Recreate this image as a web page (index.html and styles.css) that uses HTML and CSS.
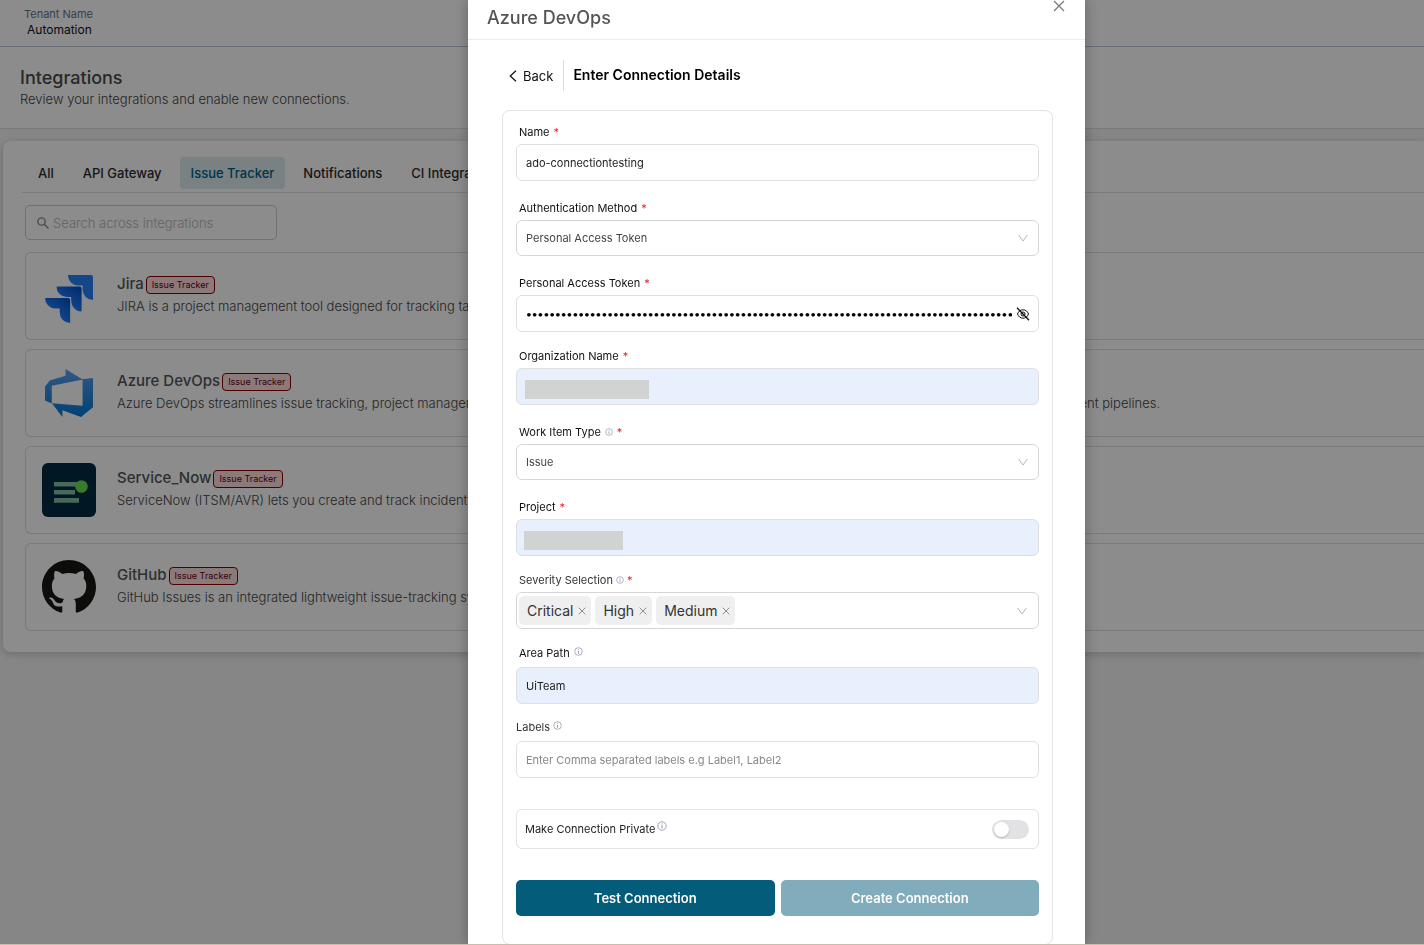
FILE: index.html
```html
<!DOCTYPE html>
<html lang="en">
<head>
<meta charset="utf-8">
<title>Integrations</title>
<link rel="stylesheet" href="styles.css">
</head>
<body>
<svg class="defs" aria-hidden="true">
  <defs>
    <linearGradient id="jira-a" x1="1" y1="0" x2="0.4" y2="0.7"><stop offset="0.1" stop-color="#0052cc"/><stop offset="1" stop-color="#2680fb"/></linearGradient>
    <linearGradient id="azure" x1="0" y1="1" x2="0" y2="0"><stop offset="0" stop-color="#0078d4"/><stop offset="1" stop-color="#5ea0ef"/></linearGradient>
    <symbol id="info" viewBox="0 0 16 16"><circle cx="8" cy="8" r="6.8" fill="none" stroke="currentColor" stroke-width="1.3"/><path d="M8 7v5M8 4v1.6" stroke="currentColor" stroke-width="1.6"/></symbol>
    <symbol id="chevron" viewBox="0 0 10 8"><path d="M.7 1 5 7 9.300 1" fill="none" stroke="currentColor"/></symbol>
    <symbol id="cross" viewBox="0 0 12 12"><path d="m1 1 10 10M11 1 1 11" fill="none" stroke="currentColor" stroke-width="1.2"/></symbol>
  </defs>
</svg>

<header class="tenant">
  <span class="tenant-label">Tenant Name</span>
  <span class="tenant-name">Automation</span>
</header>
<div class="page-head">
  <h1>Integrations</h1>
  <p>Review your integrations and enable new connections.</p>
</div>
<main class="panel">
  <nav class="tabs">
    <button type="button">All</button>
    <button type="button">API Gateway</button>
    <button type="button" class="active">Issue Tracker</button>
    <button type="button">Notifications</button>
    <button type="button">CI Integrations</button>
  </nav>
  <label class="search">
    <svg viewBox="0 0 12 12" width="12" height="12" fill="none" stroke="currentColor" stroke-width="1.3"><circle cx="4.500" cy="4.500" r="3.700"/><path d="m7.300 7.300 4.200 4.200"/></svg>
    <input type="search" placeholder="Search across integrations" aria-label="Search across integrations">
  </label>
  <ul class="items">
    <li class="item">
      <div class="logo low"><svg width="48" height="48" viewBox="0 0 24 24"><path fill="#2680fb" d="M23.013 0H11.455a5.215 5.215 0 0 0 5.215 5.215h2.129v2.057A5.215 5.215 0 0 0 24 12.483V1.005A1.001 1.001 0 0 0 23.013 0Z"/><path fill="url(#jira-a)" d="M17.294 5.757H5.736a5.215 5.215 0 0 0 5.215 5.214h2.129v2.058a5.218 5.218 0 0 0 5.215 5.214V6.758a1.001 1.001 0 0 0-1.001-1.001z"/><path fill="url(#jira-a)" d="M11.571 11.513H0a5.218 5.218 0 0 0 5.232 5.215h2.130v2.057A5.215 5.215 0 0 0 12.575 24V12.518a1.005 1.005 0 0 0-1.005-1.005z"/></svg></div>
      <div class="item-text"><h2>Jira <span class="badge">Issue Tracker</span></h2><p>JIRA is a project management tool designed for tracking tasks.</p></div>
    </li>
    <li class="item">
      <div class="logo"><svg width="54" height="54" viewBox="0 0 18 18"><path fill="url(#azure)" d="M17 4v9.740l-4 3.280-6.200-2.260V17l-3.510-4.590 10.230.8V4.440zm-3.410.49L7.850 1v2.290L2.580 4.840 1 6.870v4.610l2.260 1V6.570z"/></svg></div>
      <div class="item-text"><h2>Azure DevOps <span class="badge">Issue Tracker</span></h2><p>Azure DevOps streamlines issue tracking, project management, and team collaboration, integrating source control, CI build automation and continuous deployment pipelines.</p></div>
    </li>
    <li class="item">
      <div class="logo"><svg width="54" height="54" viewBox="0 0 54 54"><rect width="54" height="54" rx="6" fill="#032d42"/><path fill="#81bda4" d="M12 19h24v4.500H12zM12 27h21v4.500H12zM12 35h25v4.800H12z"/><circle cx="39.500" cy="23.500" r="6.300" fill="#65e04f"/></svg></div>
      <div class="item-text"><h2>Service_Now <span class="badge">Issue Tracker</span></h2><p>ServiceNow (ITSM/AVR) lets you create and track incidents from</p></div>
    </li>
    <li class="item">
      <div class="logo"><svg width="54" height="54" viewBox="0 0 16 16"><path fill="#161614" d="M8 0C3.580 0 0 3.580 0 8c0 3.540 2.290 6.530 5.470 7.590.4.070.55-.17.55-.38 0-.19-.01-.82-.01-1.490-2.010.37-2.530-.49-2.690-.94-.09-.23-.48-.94-.82-1.130-.28-.15-.68-.52-.01-.53.63-.01 1.080.58 1.230.82.72 1.210 1.870.87 2.330.66.070-.52.28-.87.51-1.070-1.780-.2-3.640-.89-3.640-3.950 0-.87.31-1.590.82-2.150-.08-.2-.36-1.020.08-2.120 0 0 .67-.21 2.200.82.64-.18 1.320-.27 2-.27s1.360.09 2 .27c1.530-1.040 2.200-.82 2.200-.82.44 1.100.16 1.920.08 2.120.51.56.82 1.270.82 2.150 0 3.070-1.870 3.750-3.650 3.950.29.25.54.73.54 1.480 0 1.070-.01 1.930-.01 2.200 0 .21.15.46.55.38A8.010 8.010 0 0 0 16 8c0-4.420-3.580-8-8-8z"/></svg></div>
      <div class="item-text"><h2>GitHub <span class="badge">Issue Tracker</span></h2><p>GitHub Issues is an integrated lightweight issue-tracking system.</p></div>
    </li>
  </ul>
</main>

<div class="overlay">
  <section class="modal" role="dialog" aria-modal="true" aria-labelledby="modal-title">
    <header class="modal-head">
      <h2 id="modal-title">Azure DevOps</h2>
      <button type="button" class="close" aria-label="Close"><svg width="12" height="12"><use href="#cross"/></svg></button>
    </header>
    <div class="modal-body">
      <div class="crumb">
        <button type="button" class="back"><svg width="8" height="12" viewBox="0 0 8 12" fill="none" stroke="currentColor" stroke-width="1.200"><path d="M7 .7 1.200 6 7 11.300"/></svg>Back</button>
        <h3>Enter Connection Details</h3>
      </div>
      <form class="form">
        <div class="field">
          <label for="name">Name <i>*</i></label>
          <input id="name" class="control" type="text" value="ado-connectiontesting">
        </div>
        <div class="field">
          <label for="auth">Authentication Method <i>*</i></label>
          <div class="wrap"><select id="auth" class="control"><option>Personal Access Token</option></select><svg class="arrow" width="10" height="8"><use href="#chevron"/></svg></div>
        </div>
        <div class="field">
          <label for="pat">Personal Access Token <i>*</i></label>
          <div class="wrap">
            <input id="pat" class="control secret" type="password" value="000000000000000000000000000000000000000000000000000000000000000000000000000000000000">
            <button type="button" class="reveal" aria-label="Show token"><svg width="14" height="14" viewBox="0 0 14 14" fill="none" stroke="currentColor"><path d="M1.500 7c1-2.800 3-4.200 5.500-4.200s4.500 1.400 5.500 4.200c-1 2.800-3 4.200-5.500 4.200S2.500 9.800 1.500 7Z"/><circle cx="7" cy="7" r="2"/><path d="m1 .8 12 12.400" stroke-width="1.300"/></svg></button>
          </div>
        </div>
        <div class="field tight">
          <label for="org">Organization Name <i>*</i></label>
          <div class="wrap"><input id="org" class="control filled" type="text"><span class="mask"></span></div>
        </div>
        <div class="field">
          <label for="type">Work Item Type <svg class="info" width="8" height="8"><use href="#info"/></svg> <i>*</i></label>
          <div class="wrap"><select id="type" class="control"><option>Issue</option></select><svg class="arrow" width="10" height="8"><use href="#chevron"/></svg></div>
        </div>
        <div class="field">
          <label for="project">Project <i>*</i></label>
          <div class="wrap"><input id="project" class="control filled" type="text"><span class="mask short"></span></div>
        </div>
        <div class="field tight">
          <label for="severity" class="light">Severity Selection <svg class="info" width="8" height="8"><use href="#info"/></svg> <i>*</i></label>
          <div class="control tags">
            <span class="tag">Critical<button type="button" aria-label="Remove Critical"><svg width="8" height="8"><use href="#cross"/></svg></button></span>
            <span class="tag">High<button type="button" aria-label="Remove High"><svg width="8" height="8"><use href="#cross"/></svg></button></span>
            <span class="tag">Medium<button type="button" aria-label="Remove Medium"><svg width="8" height="8"><use href="#cross"/></svg></button></span>
            <input id="severity" type="text">
            <svg class="arrow" width="10" height="8"><use href="#chevron"/></svg>
          </div>
        </div>
        <div class="field raised">
          <label for="area">Area Path <svg class="info" width="9" height="9"><use href="#info"/></svg></label>
          <input id="area" class="control filled" type="text" value="UiTeam">
        </div>
        <div class="field raised flush">
          <label for="labels" class="light">Labels <svg class="info" width="9" height="9"><use href="#info"/></svg></label>
          <input id="labels" class="control" type="text" placeholder="Enter Comma separated labels e.g Label1, Label2">
        </div>
        <div class="private">
          <label for="private">Make Connection Private <svg class="info" width="10" height="10"><use href="#info"/></svg></label>
          <input id="private" type="checkbox" role="switch">
        </div>
        <div class="actions">
          <button type="button">Test Connection</button>
          <button type="button" class="muted">Create Connection</button>
        </div>
      </form>
    </div>
  </section>
</div>
</body>
</html>
```

FILE: styles.css
```css
* { box-sizing: border-box; }
body {
  margin: 0;
  min-height: 100vh;
  overflow: hidden;
  background: #f5f5f5;
  color: #555;
  font-family: Inter, "Liberation Sans", sans-serif;
  font-size: 13px;
}
h1, h2, h3, p, ul { margin: 0; padding: 0; }
button, input, select { font: inherit; color: inherit; }
button { border: 0; padding: 0; background: none; }
svg { display: block; flex: none; }
.defs { position: absolute; width: 0; height: 0; }

.tenant {
  display: flex;
  flex-direction: column;
  height: 47px;
  padding: 6px 24px 0;
  background: #fff;
  border-bottom: 1px solid #bcc6d4;
  line-height: 16px;
}
.tenant-label { font-size: 11px; color: #64748b; }
.tenant-name { padding-left: 3px; font-size: 12px; color: #111; }
.page-head {
  padding: 19px 20px 20px;
  background: #fff;
  border-bottom: 1px solid #dedede;
}
.page-head h1 { font-size: 18px; line-height: 24px; font-weight: 500; color: #4a4a4a; }
.page-head p { line-height: 18px; font-weight: 300; color: #444; }

.panel {
  margin: 12px 0 0 3px;
  padding: 16px 0 21px 22px;
  background: #fff;
  border-radius: 8px 0 0 8px;
  box-shadow: 0 2px 10px rgba(0, 0, 0, .2);
}
.tabs {
  display: flex;
  gap: 7px;
  margin-left: -3px;
  padding: 0 0 3px 5px;
  border-bottom: 1px solid #e0e0e0;
}
.tabs button {
  height: 32px;
  padding: 0 11px;
  border-radius: 4px;
  font-weight: 500;
  color: #2b2b2b;
}
.tabs .active { background: #dcebed; color: #005f7d; }
.search {
  display: flex;
  align-items: center;
  gap: 4px;
  width: 252px;
  height: 35px;
  margin-top: 12px;
  padding: 0 11px;
  border: 1px solid #ccc;
  border-radius: 5px;
  color: #888;
}
.search input { flex: 1; min-width: 0; padding: 0; border: 0; background: none; outline: 0; font-weight: 300; }
.search input::placeholder { color: #b5b5b5; }
.items { display: grid; gap: 9px; margin-top: 12px; list-style: none; }
.item {
  display: flex;
  align-items: center;
  gap: 21px;
  height: 88px;
  padding-left: 16px;
  border: 1px solid #dedede;
  border-right: 0;
  border-radius: 6px 0 0 6px;
}
.logo { display: grid; place-items: center; width: 54px; height: 54px; }
.logo.low { align-items: end; }
.item-text { margin-top: -4px; white-space: nowrap; }
.item h2 { display: flex; align-items: center; gap: 2px; font-size: 15px; line-height: 24px; font-weight: 500; }
.item p { line-height: 20px; font-weight: 300; color: #444; }
.badge {
  margin-top: 2px;
  padding: 0 5px;
  border: 1px solid #8c0000;
  border-radius: 4px;
  background: #ffdddd;
  color: #600010;
  font-size: 9px;
  line-height: 16px;
  font-weight: 400;
}

.overlay {
  position: fixed;
  inset: 0;
  display: grid;
  grid-template-columns: 468fr 617fr 339fr;
  overflow: hidden;
  background: rgba(0, 0, 0, .45);
  border-bottom: 1px solid #c9bdb0;
}
.modal {
  grid-column: 2;
  min-width: 0;
  background: #fff;
  box-shadow: 0 0 14px rgba(0, 0, 0, .3);
}
.modal-head {
  display: flex;
  justify-content: space-between;
  align-items: flex-start;
  height: 40px;
  padding: 0 20px 0 19px;
  border-bottom: 1px solid #ececec;
}
.modal-head h2 { padding-top: 6px; font-size: 18px; line-height: 24px; font-weight: 500; }
.close { color: #777; }
.modal-body { padding: 20px 32px 0 34px; }
.crumb { display: flex; align-items: center; height: 31px; margin-bottom: 19px; color: #111; }
.back { display: flex; align-items: center; gap: 6px; height: 31px; padding: 0 10px 0 7px; border-right: 1px solid #ddd; }
.crumb h3 { padding: 0 0 2px 9px; font-size: 14px; font-weight: 600; color: #000; }

.form {
  padding: 13px 13px 28px;
  border: 1px solid #e3e3e3;
  border-radius: 8px;
  font-size: 11px;
  color: #222;
}
.field { display: grid; gap: 4px; margin-top: 19px; }
.field:first-child { margin-top: 0; }
.field.tight { margin-top: 16px; }
.field.raised { margin-top: 16px; gap: 6px; }
.field.flush { margin-top: 15px; }
.field > label { display: flex; align-items: center; gap: 4px; padding-left: 3px; line-height: 16px; color: #111; }
.field > label.light { color: #333; gap: 3px; }
.field.flush > label { padding-left: 0; }
.field i { color: #e5252a; font-style: normal; }
.info { color: #8a93a5; }
.raised .info { margin-bottom: 3px; }
.wrap { position: relative; display: grid; }
.control {
  width: 100%;
  height: 37px;
  padding: 0 9px;
  border: 1px solid #e0e0e0;
  border-radius: 6px;
  background: #fff;
  outline: 0;
}
.control::placeholder { color: #888; }
select.control { height: 36px; appearance: none; border-color: #d6d6d6; color: #444; }
.control.filled { background: #e8effd; }
.secret { padding-right: 26px; color: #000; font-family: Lato, sans-serif; font-size: 10px; }
.arrow { position: absolute; right: 11px; top: 14px; color: #b5b5b5; }
.reveal { position: absolute; right: 9px; top: 12px; color: #111; }
.mask { position: absolute; left: 9px; top: 12px; width: 124px; height: 19px; background: #d0d3d2; }
.mask.short { left: 8px; width: 99px; }
.tags { position: relative; display: flex; align-items: center; gap: 4px; padding: 0 2px; border-color: #d6d6d6; }
.tag { display: flex; align-items: center; gap: 5px; height: 29px; padding: 0 5px 0 8px; border-radius: 5px; background: #efefef; font-size: 14px; color: #333; }
.tag button { color: #777; }
.tags input { flex: 1; min-width: 0; border: 0; outline: 0; background: none; }
.private {
  display: flex;
  align-items: center;
  justify-content: space-between;
  height: 40px;
  margin-top: 31px;
  padding: 0 9px 0 8px;
  border: 1px solid #e3e3e3;
  border-radius: 6px;
}
.private label { display: flex; align-items: center; gap: 2px; }
.private .info { margin-bottom: 6px; }
.private input {
  appearance: none;
  display: flex;
  width: 37px;
  height: 19px;
  margin: 0;
  padding: 2px;
  border-radius: 10px;
  background: #e2e2e4;
}
.private input::before { content: ""; width: 15px; height: 15px; border-radius: 50%; background: #fff; box-shadow: 0 1px 2px rgba(0, 0, 0, .2); }
.private input:checked { justify-content: flex-end; background: #035c79; }
.actions { display: grid; grid-template-columns: 1fr 1fr; gap: 6px; margin-top: 31px; }
.actions button { height: 36px; border-radius: 5px; background: #035c79; color: #fff; font-size: 13px; font-weight: 600; }
.actions .muted { background: #80acbb; }
```
